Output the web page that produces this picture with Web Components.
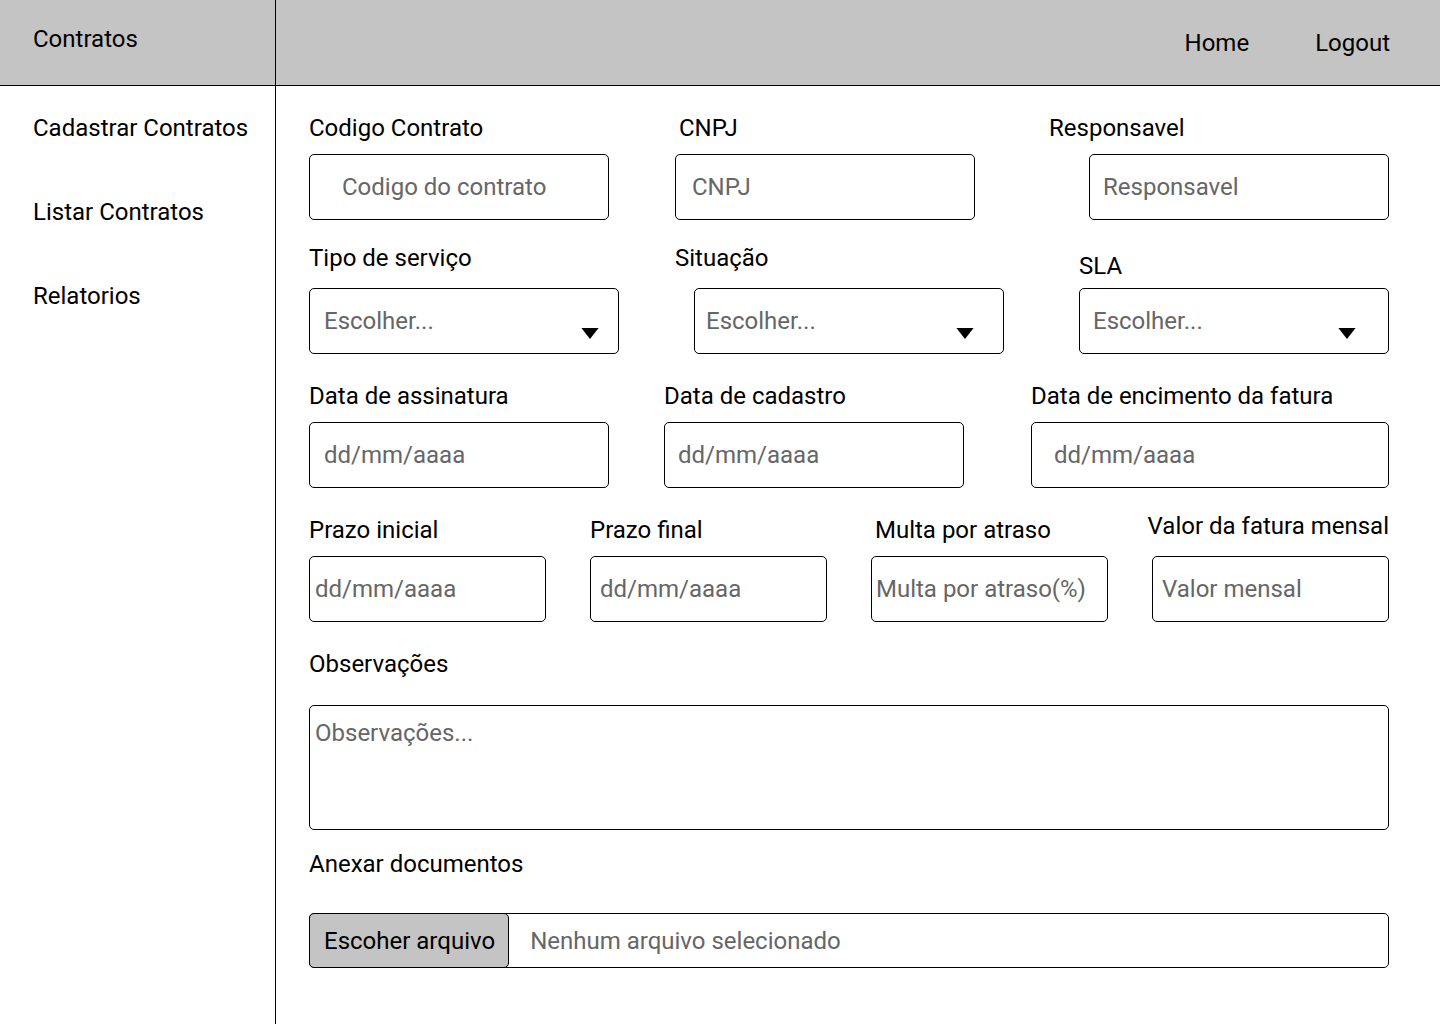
<!DOCTYPE html>
<html lang="pt-BR">
<head>
<meta charset="utf-8">
<meta name="viewport" content="width=device-width, initial-scale=1">
<title>Contratos</title>
<style>
  :root { --line: #000; --bar: #c4c4c4; --muted: #666; --side: 275px; --inset: 33px; }
  body { margin: 0; background: #fff; color: #000; font: 24px/28px Roboto, "Liberation Sans", sans-serif; }
</style>
</head>
<body>
<contract-app>
  <app-header slot="header" brand="Contratos">
    <nav-link href="#home">Home</nav-link>
    <nav-link href="#logout">Logout</nav-link>
  </app-header>
  <side-menu slot="menu">
    <nav-link href="#cadastrar">Cadastrar Contratos</nav-link>
    <nav-link href="#listar">Listar Contratos</nav-link>
    <nav-link href="#relatorios">Relatorios</nav-link>
  </side-menu>
  <field-row style="--cols: 300fr 66px 300fr 74px 340fr">
    <text-field label="Codigo Contrato" placeholder="Codigo do contrato" style="--pad: 32px"></text-field>
    <text-field label="CNPJ" placeholder="CNPJ" style="--pad: 16px; --label-indent: 4px"></text-field>
    <text-field label="Responsavel" placeholder="Responsavel" style="--indent: 40px"></text-field>
  </field-row>
  <field-row style="--cols: 310fr 56px 329fr 75px 310fr">
    <select-field label="Tipo de serviço" option="Escolher..." label-gap="far" style="--pad: 14px; --arrow: 20px"></select-field>
    <select-field label="Situação" option="Escolher..." label-gap="far" style="--indent: 19px; --pad: 11px; --arrow: 30px"></select-field>
    <select-field label="SLA" option="Escolher..." label-gap="near" style="--arrow: 33px"></select-field>
  </field-row>
  <field-row style="--cols: 300fr 55px 300fr 67px 358fr">
    <text-field label="Data de assinatura" placeholder="dd/mm/aaaa" style="--pad: 14px"></text-field>
    <text-field label="Data de cadastro" placeholder="dd/mm/aaaa"></text-field>
    <text-field label="Data de encimento da fatura" placeholder="dd/mm/aaaa" style="--pad: 22px"></text-field>
  </field-row>
  <field-row style="--cols: 1fr 44px 1fr 44px 1fr 44px 1fr">
    <text-field label="Prazo inicial" placeholder="dd/mm/aaaa" style="--pad: 5px"></text-field>
    <text-field label="Prazo final" placeholder="dd/mm/aaaa" style="--pad: 9px"></text-field>
    <text-field label="Multa por atraso" placeholder="Multa por atraso(%)" style="--pad: 4px; --label-indent: 4px"></text-field>
    <text-field label="Valor da fatura mensal" placeholder="Valor mensal" label-gap="far" label-end style="--pad: 9px"></text-field>
  </field-row>
  <notes-field slot="extra" label="Observações" placeholder="Observações..."></notes-field>
  <file-field slot="extra" label="Anexar documentos" button="Escoher arquivo" status="Nenhum arquivo selecionado"></file-field>
</contract-app>

<script>
// Shared box and label styles for every form field.
const fieldCss = `
  :host { display: flex; flex-direction: column; min-width: 0; }
  * { box-sizing: border-box; }
  label { display: block; padding-left: var(--label-indent, 0px); white-space: nowrap; }
  .head { display: flex; align-items: flex-end; height: 44px; padding-bottom: 12px; }
  :host([label-gap="near"]) .head { padding-bottom: 8px; }
  :host([label-gap="far"]) .head { padding-bottom: 16px; }
  :host([label-end]) .head { justify-content: flex-end; }
  .box { position: relative; margin-left: var(--indent, 0px); }
  input, select, textarea {
    display: block; width: 100%; margin: 0; font: inherit; color: inherit; background: #fff;
    border: 1px solid var(--line); border-radius: 5px; padding: 0 var(--pad, 13px);
  }
  input, select { height: 66px; }
  ::placeholder { color: var(--muted); opacity: 1; }
`;

class Base extends HTMLElement {
  connectedCallback() {
    if (this.shadowRoot) return;
    this.attachShadow({ mode: "open" }).innerHTML = this.render();
    this.ready();
  }
  at(name) { return this.getAttribute(name) || ""; }
  ready() {}
}

customElements.define("contract-app", class extends Base {
  render() {
    return `<style>
      :host { display: flex; flex-direction: column; min-height: 100vh; }
      .body { display: flex; flex: 1; }
      main { flex: 1; min-width: 0; padding: 24px 51px 24px var(--inset); }
      .rows { display: flex; flex-direction: column; gap: 24px; }
    </style>
    <slot name="header"></slot>
    <div class="body">
      <slot name="menu"></slot>
      <main><form><div class="rows"><slot></slot></div><slot name="extra"></slot></form></main>
    </div>`;
  }
});

customElements.define("nav-link", class extends Base {
  render() {
    return `<style>
      :host { display: block; }
      a { color: inherit; text-decoration: none; white-space: nowrap; }
    </style><a href="${this.at("href")}"><slot></slot></a>`;
  }
});

customElements.define("app-header", class extends Base {
  render() {
    return `<style>
      :host { display: block; }
      header { display: flex; height: 85px; background: var(--bar); border-bottom: 1px solid var(--line); }
      .brand { flex: none; width: var(--side); border-right: 1px solid var(--line); }
      .brand span { display: block; padding: 25px 0 0 var(--inset); }
      nav { flex: 1; display: flex; justify-content: flex-end; align-items: center; gap: 66px; padding-right: 50px; }
    </style>
    <header><div class="brand"><span>${this.at("brand")}</span></div><nav><slot></slot></nav></header>`;
  }
});

customElements.define("side-menu", class extends Base {
  render() {
    return `<style>
      :host { display: block; flex: none; width: var(--side); border-right: 1px solid var(--line); }
      nav { display: flex; flex-direction: column; gap: 56px; padding: 28px 0 0 var(--inset); }
    </style><nav><slot></slot></nav>`;
  }
});

// The odd tracks of --cols hold the fields, the even ones the space between them.
customElements.define("field-row", class extends Base {
  render() {
    return `<style>
      :host { display: grid; grid-template-columns: var(--cols); }
      ::slotted(:nth-child(1)) { grid-column: 1; }
      ::slotted(:nth-child(2)) { grid-column: 3; }
      ::slotted(:nth-child(3)) { grid-column: 5; }
      ::slotted(:nth-child(4)) { grid-column: 7; }
      ::slotted(*) { grid-row: 1; }
    </style><slot></slot>`;
  }
});

customElements.define("text-field", class extends Base {
  render() {
    return `<style>${fieldCss}</style>
    <div class="head"><label for="c">${this.at("label")}</label></div>
    <div class="box"><input id="c" type="text" placeholder="${this.at("placeholder")}"></div>`;
  }
});

customElements.define("select-field", class extends Base {
  render() {
    return `<style>${fieldCss}
      select { appearance: none; color: var(--muted); }
      svg { position: absolute; right: var(--arrow); top: 40px; pointer-events: none; }
    </style>
    <div class="head"><label for="c">${this.at("label")}</label></div>
    <div class="box">
      <select id="c"><option>${this.at("option")}</option></select>
      <svg width="18" height="11" viewBox="0 0 18 11" aria-hidden="true"><path d="M0.4 0H17.6L9 11Z"/></svg>
    </div>`;
  }
});

customElements.define("notes-field", class extends Base {
  render() {
    return `<style>${fieldCss}
      :host { margin-top: 28px; gap: 27px; }
      textarea { height: 125px; padding: 13px 5px; resize: none; }
    </style>
    <label for="c">${this.at("label")}</label>
    <textarea id="c" placeholder="${this.at("placeholder")}"></textarea>`;
  }
});

customElements.define("file-field", class extends Base {
  render() {
    return `<style>${fieldCss}
      :host { margin-top: 20px; gap: 35px; }
      .file { display: flex; align-items: center; gap: 21px; position: relative; height: 55px; border: 1px solid var(--line); border-radius: 5px; }
      input { position: absolute; width: 1px; height: 1px; padding: 0; border: 0; opacity: 0; }
      button { align-self: stretch; margin: -1px 0 -1px -1px; padding: 0 13px 0 14px; font: inherit; color: inherit; white-space: nowrap; background: var(--bar); border: 1px solid var(--line); border-radius: 5px; }
      .status { color: var(--muted); }
    </style>
    <label for="c">${this.at("label")}</label>
    <div class="file">
      <input id="c" type="file" tabindex="-1">
      <button type="button">${this.at("button")}</button>
      <span class="status">${this.at("status")}</span>
    </div>`;
  }
  ready() {
    const input = this.shadowRoot.querySelector("input");
    this.shadowRoot.querySelector("button").onclick = () => input.click();
    input.onchange = () => {
      this.shadowRoot.querySelector(".status").textContent = input.files[0] ? input.files[0].name : this.at("status");
    };
  }
});
</script>
</body>
</html>
